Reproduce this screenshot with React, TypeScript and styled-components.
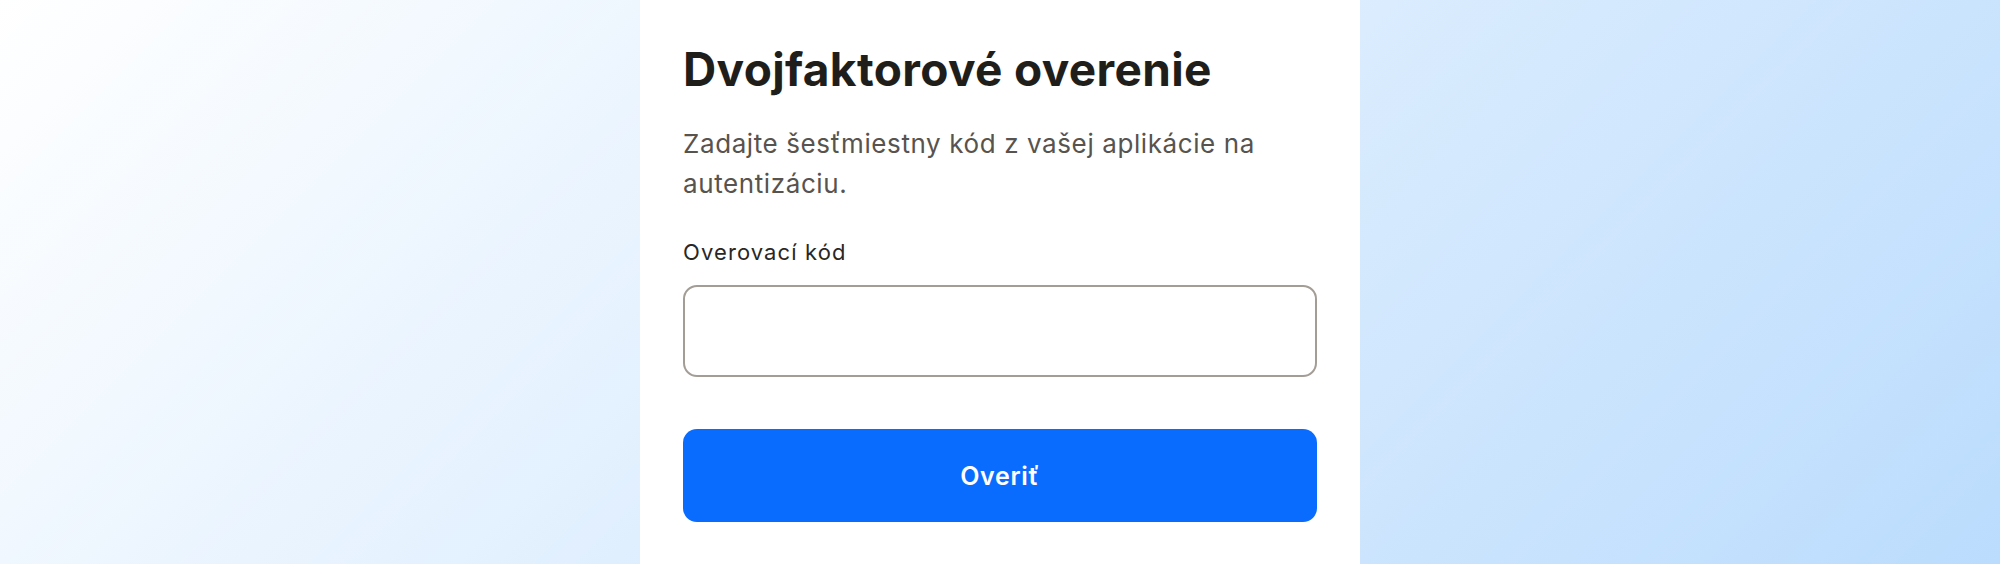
import React from 'react';
import styled, { createGlobalStyle } from 'styled-components';

const GlobalStyle = createGlobalStyle`
  html, body {
    margin: 0;
    padding: 0;
  }
  body {
    font-family: Inter, "Noto Sans", "Liberation Sans", sans-serif;
    font-optical-sizing: none;
    font-variation-settings: "opsz" 14;
  }
  * {
    box-sizing: border-box;
  }
`;

const Page = styled.div`
  display: flex;
  justify-content: center;
  min-height: 100vh;
  background: linear-gradient(135deg, #ffffff 0%, #bbdcfd 100%);
`;

const Card = styled.div`
  display: flex;
  flex-direction: column;
  width: 720px;
  padding: 43px;
  background: #ffffff;
`;

const Title = styled.h1`
  margin: 0;
  font-size: 46px;
  line-height: 53px;
  font-weight: 700;
  letter-spacing: 0.35px;
  color: #1f1e1b;
`;

const Lead = styled.p`
  margin: 28px 0 0;
  font-size: 26px;
  line-height: 40px;
  font-weight: 400;
  letter-spacing: 0.6px;
  color: #57534e;
`;

const Form = styled.form`
  display: flex;
  flex-direction: column;
  margin-top: 33px;
`;

const Label = styled.label`
  font-size: 22px;
  line-height: 30px;
  font-weight: 400;
  letter-spacing: 1.1px;
  color: #292724;
`;

const CodeInput = styled.input`
  margin-top: 18px;
  height: 92px;
  width: 100%;
  padding: 0 20px;
  border: 2px solid #a39d96;
  border-radius: 14px;
  background: #ffffff;
  font-family: inherit;
  font-size: 24px;
  color: #1f1e1b;
  outline: none;
`;

const SubmitButton = styled.button`
  margin-top: 52px;
  height: 93px;
  width: 100%;
  border: none;
  border-radius: 14px;
  background: #0a6cff;
  color: #ffffff;
  font-family: inherit;
  font-size: 25px;
  font-weight: 600;
  letter-spacing: 0.7px;
  cursor: pointer;
`;

export default function App() {
  return (
    <>
      <GlobalStyle />
      <Page>
        <Card>
          <Title>Dvojfaktorové overenie</Title>
          <Lead>Zadajte šesťmiestny kód z vašej aplikácie na autentizáciu.</Lead>
          <Form onSubmit={e => e.preventDefault()}>
            <Label htmlFor="code">Overovací kód</Label>
            <CodeInput id="code" type="text" inputMode="numeric" autoComplete="one-time-code" />
            <SubmitButton type="submit">Overiť</SubmitButton>
          </Form>
        </Card>
      </Page>
    </>
  );
}
